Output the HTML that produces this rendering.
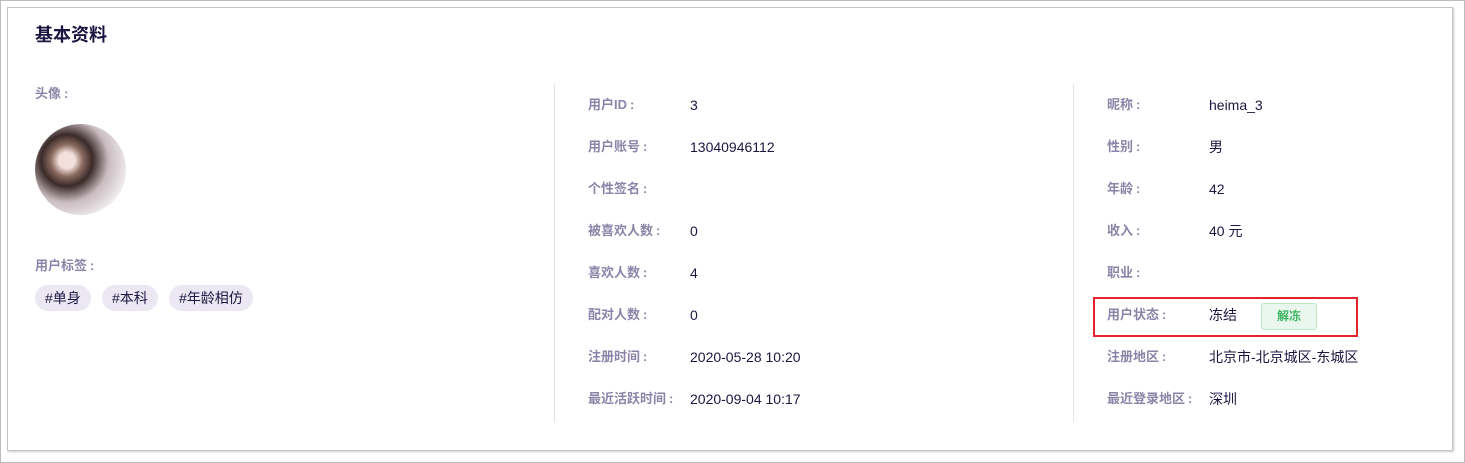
<!DOCTYPE html>
<html><head><meta charset="utf-8"><style>
*{margin:0;padding:0;box-sizing:border-box}
body{width:1465px;height:463px;background:#fff;position:relative;overflow:hidden;font-family:"Liberation Sans","Noto Sans CJK SC",sans-serif;}
.frame{position:absolute;left:0;top:0;width:1465px;height:463px;border:1px solid #bcbcbc}
.box{position:absolute;left:7px;top:7px;width:1446px;height:444px;border:1px solid #c6c6c6;box-shadow:1px 1px 2px #ccc;}
.t{position:absolute;font-size:14px;line-height:16px;white-space:nowrap}
.l{color:#8c84a8;font-weight:bold;font-size:13px}
.l i{font-style:normal;display:inline-block;margin-left:3px;width:10px}
.v{color:#1d1640}
.h{left:35px;top:25px;font-size:18px;font-weight:bold;color:#1b1340;line-height:20px}
.div{position:absolute;top:84px;width:1px;height:338px;background:#e4e4e8}
.tag{position:absolute;top:285px;height:26px;border-radius:13px;background:#ebe8f3;color:#1d1640;font-size:14px;line-height:26px;padding:0 10px}
.av{position:absolute;left:35px;top:124px;width:91px;height:91px;border-radius:50%;background:radial-gradient(circle at 35% 40%,#f3e0dc 0 10%,#8a6a60 20%,#3a2a28 32%,#c9bcc0 52%,#eeeaec 75%)}
.red{position:absolute;left:1093px;top:297px;width:265px;height:40px;border:2px solid #e32229}
.btn{position:absolute;left:1261px;top:303px;width:56px;height:27px;border:1px solid #b9e6c6;background:#e9f7ee;border-radius:3px;color:#3cb561;font-size:12px;font-weight:bold;text-align:center;line-height:25px}
</style></head><body>
<div class="frame"></div>
<div class="box"></div>
<div class="t h">基本资料</div>
<div class="t l" style="left:35px;top:86px">头像<i>:</i></div>
<div class="av"></div>
<div class="t l" style="left:35px;top:258px">用户标签<i>:</i></div>
<div class="tag" style="left:35px">#单身</div>
<div class="tag" style="left:102px">#本科</div>
<div class="tag" style="left:169px">#年龄相仿</div>
<div class="div" style="left:554px"></div>
<div class="div" style="left:1073px"></div>

<div class="t l" style="left:588px;top:97px">用户ID<i>:</i></div><div class="t v" style="left:690px;top:97px">3</div>
<div class="t l" style="left:588px;top:139px">用户账号<i>:</i></div><div class="t v" style="left:690px;top:139px">13040946112</div>
<div class="t l" style="left:588px;top:181px">个性签名<i>:</i></div>
<div class="t l" style="left:588px;top:223px">被喜欢人数<i>:</i></div><div class="t v" style="left:690px;top:223px">0</div>
<div class="t l" style="left:588px;top:265px">喜欢人数<i>:</i></div><div class="t v" style="left:690px;top:265px">4</div>
<div class="t l" style="left:588px;top:307px">配对人数<i>:</i></div><div class="t v" style="left:690px;top:307px">0</div>
<div class="t l" style="left:588px;top:349px">注册时间<i>:</i></div><div class="t v" style="left:690px;top:349px">2020-05-28 10:20</div>
<div class="t l" style="left:588px;top:391px">最近活跃时间<i>:</i></div><div class="t v" style="left:690px;top:391px">2020-09-04 10:17</div>

<div class="t l" style="left:1107px;top:97px">昵称<i>:</i></div><div class="t v" style="left:1209px;top:97px">heima_3</div>
<div class="t l" style="left:1107px;top:139px">性别<i>:</i></div><div class="t v" style="left:1209px;top:139px">男</div>
<div class="t l" style="left:1107px;top:181px">年龄<i>:</i></div><div class="t v" style="left:1209px;top:181px">42</div>
<div class="t l" style="left:1107px;top:223px">收入<i>:</i></div><div class="t v" style="left:1209px;top:223px">40 元</div>
<div class="t l" style="left:1107px;top:265px">职业<i>:</i></div>
<div class="red"></div>
<div class="t l" style="left:1107px;top:307px">用户状态<i>:</i></div><div class="t v" style="left:1209px;top:307px">冻结</div>
<div class="btn">解冻</div>
<div class="t l" style="left:1107px;top:349px">注册地区<i>:</i></div><div class="t v" style="left:1209px;top:349px">北京市-北京城区-东城区</div>
<div class="t l" style="left:1107px;top:391px">最近登录地区<i>:</i></div><div class="t v" style="left:1209px;top:391px">深圳</div>
</body></html>
